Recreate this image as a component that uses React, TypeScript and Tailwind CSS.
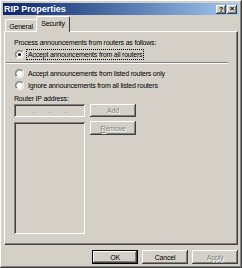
import React from 'react';

const raised =
  'shadow-[inset_-1px_-1px_#404040,inset_1px_1px_#ffffff,inset_-2px_-2px_#808080,inset_2px_2px_#d4d0c8]';
const sunken =
  'shadow-[inset_1px_1px_#808080,inset_-1px_-1px_#ffffff,inset_2px_2px_#404040,inset_-2px_-2px_#d4d0c8]';

const Radio = ({ checked }: { checked?: boolean }) => (
  <svg width="9" height="9" viewBox="0 0 12 12" className="shrink-0">
    <circle cx="6" cy="6" r="5.5" fill="#ffffff" />
    <path d="M1.8 10.2 A5.5 5.5 0 0 1 10.2 1.8" fill="none" stroke="#808080" strokeWidth="1" />
    <path d="M2.6 9.4 A4.5 4.5 0 0 1 9.4 2.6" fill="none" stroke="#404040" strokeWidth="1" />
    <path d="M10.2 1.8 A5.5 5.5 0 0 1 1.8 10.2" fill="none" stroke="#ffffff" strokeWidth="1" />
    <path d="M9.4 2.6 A4.5 4.5 0 0 1 2.6 9.4" fill="none" stroke="#d4d0c8" strokeWidth="1" />
    {checked && <circle cx="6" cy="6" r="2" fill="#000000" />}
  </svg>
);

const DisabledText = ({ children }: { children: React.ReactNode }) => (
  <span className="text-[#808080] [text-shadow:1px_1px_0_#ffffff]">{children}</span>
);

const Button = ({
  children,
  isDefault,
  className = '',
}: {
  children: React.ReactNode;
  isDefault?: boolean;
  className?: string;
}) => (
  <div
    className={`flex items-center justify-center bg-[#d4d0c8] ${
      isDefault ? 'border border-black' : ''
    } ${raised} ${className}`}
  >
    {children}
  </div>
);

export default function App() {
  return (
    <div
      className={`w-[242px] h-[268px] bg-[#d4d0c8] p-[3px] flex flex-col text-[7px] tracking-[-0.2px] leading-none text-black ${raised}`}
      style={{ fontFamily: '"Liberation Sans", Arial, sans-serif' }}
    >
      {/* Title bar */}
      <div className="h-[12px] flex items-center justify-between bg-gradient-to-r from-[#0a246a] to-[#a6caf0] pl-[1px] pr-[2px]">
        <span className="text-white font-bold text-[9px] tracking-normal">RIP Properties</span>
        <div className="flex gap-[1px]">
          <div className={`w-[10px] h-[9px] flex items-center justify-center bg-[#d4d0c8] font-bold text-[7px] ${raised}`}>
            ?
          </div>
          <div className={`w-[10px] h-[9px] flex items-center justify-center bg-[#d4d0c8] font-bold text-[8px] ${raised}`}>
            ×
          </div>
        </div>
      </div>

      {/* Tabs */}
      <div className="flex items-end pl-[2px] mt-[1px] h-[16px] relative z-10">
        <div className="h-[13px] w-[32px] flex items-center justify-center border-t border-l border-white border-r border-r-[#404040] rounded-t-[2px]">
          General
        </div>
        <div className="h-[16px] w-[34px] -ml-[1px] pb-[2px] flex items-center justify-center bg-[#d4d0c8] border-t border-l border-white border-r border-r-[#404040] rounded-t-[2px]">
          Security
        </div>
      </div>

      {/* Panel */}
      <div className="-mt-[1px] mx-[1px] w-[234px] h-[214px] border border-t-white border-l-white border-r-[#404040] border-b-[#404040] flex flex-col">
        <div className="flex-1 border-r border-b border-[#808080] pl-[9px] pr-[6px] pt-[6px] flex flex-col">
          <div className="h-[9px] flex items-center">Process announcements from routers as follows:</div>
          <div className="mt-[2px] h-[10px] flex items-center gap-[3px] pl-[1px]">
            <Radio checked />
            <span className="outline outline-1 outline-dotted outline-black px-[1px] py-[1px]">
              Accept announcements from all routers
            </span>
          </div>
          <div className="mt-[3px] -ml-[8px] mr-[2px] border-t border-[#808080] border-b border-b-white" />
          <div className="mt-[4px] h-[10px] flex items-center gap-[4px] pl-[1px]">
            <Radio />
            <span>Accept announcements from listed routers only</span>
          </div>
          <div className="mt-[2px] h-[10px] flex items-center gap-[4px] pl-[1px]">
            <Radio />
            <span>Ignore announcements from all listed routers</span>
          </div>
          <div className="mt-[3px] h-[10px] flex items-center">Router IP address:</div>
          <div className="mt-[1px] flex gap-[5px]">
            <div className="flex flex-col gap-[5px]">
              <div className={`w-[71px] h-[13px] bg-[#d4d0c8] flex items-center justify-around px-[12px] text-[#808080] ${sunken}`}>
                <span>.</span>
                <span>.</span>
                <span>.</span>
              </div>
              <div className={`w-[71px] h-[112px] bg-[#d4d0c8] ${sunken}`} />
            </div>
            <div className="flex flex-col gap-[4px]">
              <Button className="w-[46px] h-[13px]">
                <DisabledText>Add</DisabledText>
              </Button>
              <Button className="w-[46px] h-[14px]">
                <DisabledText>
                  <u>R</u>emove
                </DisabledText>
              </Button>
            </div>
          </div>
        </div>
      </div>

      {/* Bottom buttons */}
      <div className="mt-[5px] flex justify-end gap-[4px] pr-[1px]">
        <Button isDefault className="w-[46px] h-[14px]">
          OK
        </Button>
        <Button className="w-[46px] h-[14px]">Cancel</Button>
        <Button className="w-[46px] h-[14px]">
          <DisabledText>Apply</DisabledText>
        </Button>
      </div>
    </div>
  );
}
